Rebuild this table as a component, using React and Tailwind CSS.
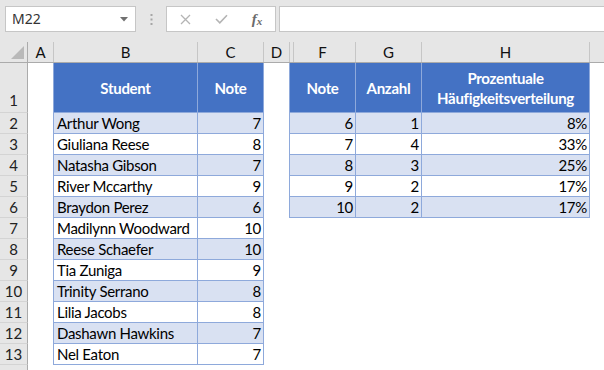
import React from "react";

const COLS = ["A", "B", "C", "D", "F", "G", "H"];
const W = [26, 144, 66, 26, 66, 66, 168];

const left = [
  ["Arthur Wong", 7],
  ["Giuliana Reese", 8],
  ["Natasha Gibson", 7],
  ["River Mccarthy", 9],
  ["Braydon Perez", 6],
  ["Madilynn Woodward", 10],
  ["Reese Schaefer", 10],
  ["Tia Zuniga", 9],
  ["Trinity Serrano", 8],
  ["Lilia Jacobs", 8],
  ["Dashawn Hawkins", 7],
  ["Nel Eaton", 7],
];

const right = [
  [6, 1, "8%"],
  [7, 4, "33%"],
  [8, 3, "25%"],
  [9, 2, "17%"],
  [10, 2, "17%"],
];

function RowHead({ n, tall }) {
  return (
    <div
      className={
        "w-[28px] shrink-0 bg-[#e6e6e6] border-r border-r-[#ababab] border-b border-b-[#d4d4d4] flex justify-center text-[15px] text-[#222] " +
        (tall ? "items-end pb-[3px] leading-[18px]" : "items-center leading-[18px]")
      }
    >
      {n}
    </div>
  );
}

function Toolbar() {
  return (
    <div className="h-[42px] bg-[#e6e6e6] flex items-start pt-[6px] pl-[5px] gap-0">
      <div className="w-[131px] h-[26px] bg-white border border-[#c6c6c6] flex items-center justify-between pl-[6px] pr-[7px]">
        <span className="font-['Noto_Sans'] text-[14px] text-[#333] leading-none">M22</span>
        <svg width="8" height="5" viewBox="0 0 8 5">
          <path d="M0 0 L8 0 L4 4.5 Z" fill="#707070" />
        </svg>
      </div>
      <div className="w-[30px] h-[26px] flex items-center justify-center">
        <svg width="3" height="11" viewBox="0 0 3 11">
          <rect x="0.5" y="0" width="2" height="2" fill="#a6a6a6" />
          <rect x="0.5" y="4.5" width="2" height="2" fill="#a6a6a6" />
          <rect x="0.5" y="9" width="2" height="2" fill="#a6a6a6" />
        </svg>
      </div>
      <div className="w-[110px] h-[26px] bg-white border border-[#c6c6c6] flex items-center">
        <div className="w-[36px] flex justify-center">
          <svg width="11" height="11" viewBox="0 0 11 11">
            <path d="M1 1 L10 10 M10 1 L1 10" stroke="#b4b4b4" strokeWidth="1.3" />
          </svg>
        </div>
        <div className="w-[36px] flex justify-center">
          <svg width="13" height="10" viewBox="0 0 13 10">
            <path d="M1 5 L4.8 8.8 L12 1.2" stroke="#b4b4b4" strokeWidth="1.6" fill="none" />
          </svg>
        </div>
        <div className="w-[36px] flex justify-center items-center font-['Liberation_Serif'] italic text-[#6b6b6b] leading-none">
          <span className="text-[15px] font-bold">f</span>
          <span className="text-[11px] font-bold mt-[4px]">x</span>
        </div>
      </div>
      <div className="ml-[3px] flex-1 h-[26px] bg-white border border-[#c6c6c6] border-r-0"></div>
    </div>
  );
}

function ColHeader() {
  return (
    <div className="flex h-[21px] bg-[#e6e6e6] border-b border-b-[#ababab]">
      <div className="w-[28px] shrink-0 border-r border-r-[#ababab] flex items-end justify-end pr-[3px] pb-[3px]">
        <svg width="13" height="13" viewBox="0 0 13 13">
          <path d="M13 0 L13 13 L0 13 Z" fill="#b9b9b9" />
        </svg>
      </div>
      {COLS.map((c, i) => (
        <div
          key={c}
          style={{ width: W[i] }}
          className={
            "shrink-0 border-r border-r-[#c6c6c6] flex items-center justify-center text-[15px] text-[#111] leading-none " +
            (c === "F" ? "shadow-[inset_3px_0_0_0_#e6e6e6,inset_4px_0_0_0_#c6c6c6]" : "")
          }
        >
          {c}
        </div>
      ))}
      <div className="flex-1"></div>
    </div>
  );
}

const cellBase =
  "shrink-0 border-r border-b border-[#8ea9db] text-[15px] leading-[18px] text-black flex items-center tracking-[-0.3px]";

export default function App() {
  const rows = [];
  rows.push(
    <div key="r1" className="flex h-[50px]">
      <RowHead n={1} tall />
      <div className="w-[26px] shrink-0 border-r border-r-[#8ea9db]"></div>
      <div className={cellBase + " w-[144px] bg-[#4472c4] text-white font-bold justify-center"}>Student</div>
      <div className={cellBase + " w-[66px] bg-[#4472c4] text-white font-bold justify-center"}>Note</div>
      <div className="w-[26px] shrink-0 border-r border-r-[#8ea9db]"></div>
      <div className={cellBase + " w-[66px] bg-[#4472c4] text-white font-bold justify-center"}>Note</div>
      <div className={cellBase + " w-[66px] bg-[#4472c4] text-white font-bold justify-center"}>Anzahl</div>
      <div
        className={
          cellBase +
          " w-[168px] bg-[#4472c4] text-white font-bold justify-center text-center leading-[20px] pt-[1px]"
        }
      >
        Prozentuale
        <br />
        Häufigkeitsverteilung
      </div>
      <div className="flex-1"></div>
    </div>
  );
  for (let i = 0; i < 13; i++) {
    const rn = i + 2;
    const band = i % 2 === 0 ? "bg-[#d9e1f2]" : "bg-white";
    const l = left[i];
    const r = right[i];
    rows.push(
      <div key={rn} className="flex h-[21px]">
        <RowHead n={rn <= 13 ? rn : ""} />
        <div className={"w-[26px] shrink-0 " + (l ? "border-r border-r-[#8ea9db]" : "")}></div>
        {l ? (
          <>
            <div className={cellBase + " w-[144px] pl-[3px] " + band}>{l[0]}</div>
            <div className={cellBase + " w-[66px] justify-end pr-[2px] " + band}>{l[1]}</div>
          </>
        ) : (
          <div className="w-[210px] shrink-0"></div>
        )}
        <div className={"w-[26px] shrink-0 " + (r ? "border-r border-r-[#8ea9db]" : "")}></div>
        {r ? (
          <>
            <div className={cellBase + " w-[66px] justify-end pr-[2px] " + band}>{r[0]}</div>
            <div className={cellBase + " w-[66px] justify-end pr-[2px] " + band}>{r[1]}</div>
            <div className={cellBase + " w-[168px] justify-end pr-[2px] " + band}>{r[2]}</div>
          </>
        ) : null}
        <div className="flex-1"></div>
      </div>
    );
  }

  return (
    <div className="w-[604px] h-[370px] overflow-hidden bg-white font-['Lato',sans-serif]">
      <Toolbar />
      <ColHeader />
      {rows}
    </div>
  );
}
